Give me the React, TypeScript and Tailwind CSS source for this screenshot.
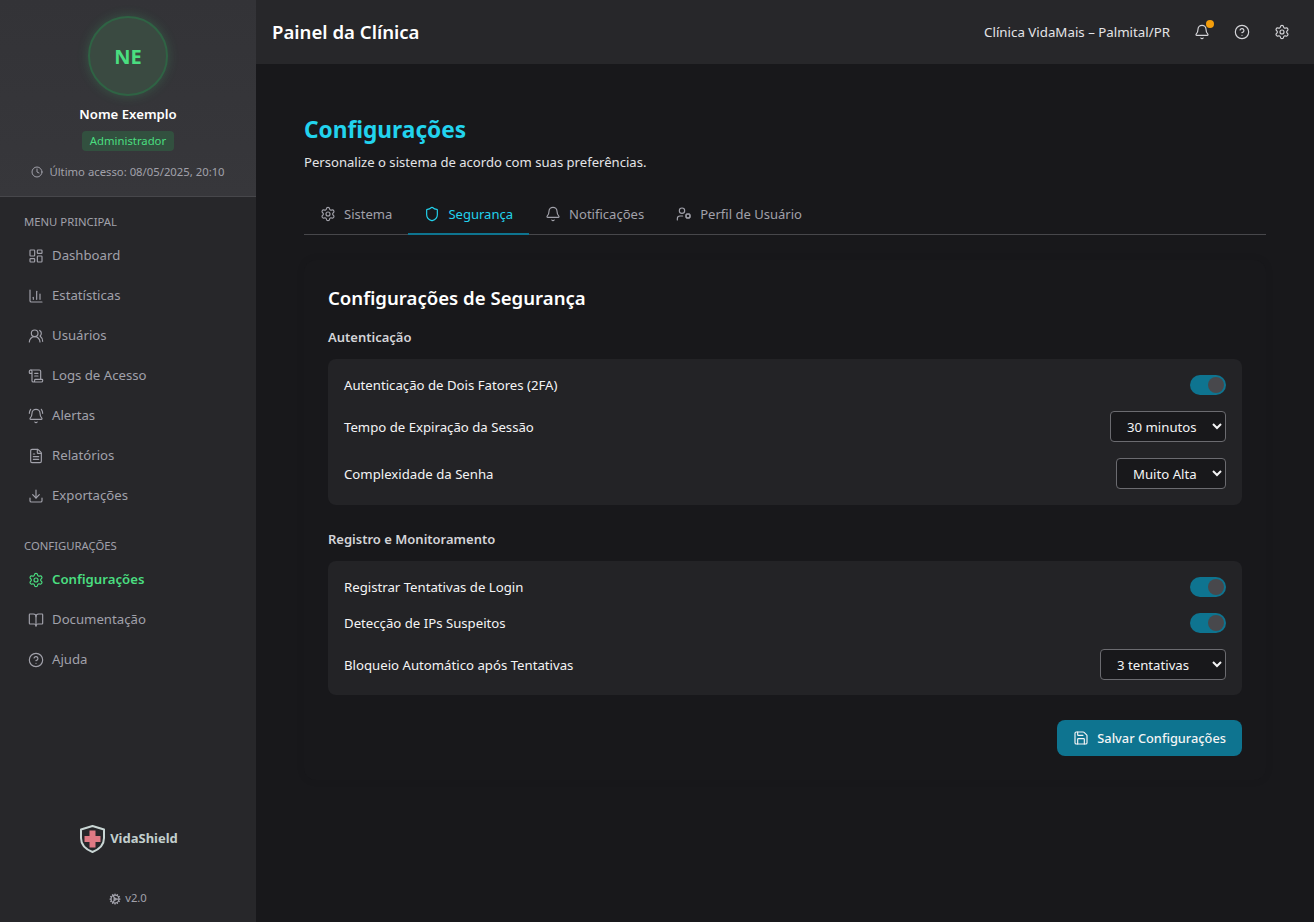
import {
  Bell,
  BellRing,
  BookOpen,
  ChartColumn,
  CircleHelp,
  Clock,
  Cog,
  Download,
  FileText,
  LayoutDashboard,
  Save,
  ScrollText,
  Settings,
  Shield,
  UserCog,
  UsersRound,
} from "lucide-react";
import type { ComponentType, ReactNode } from "react";

type IconType = ComponentType<{ className?: string; size?: number; strokeWidth?: number }>;

const mainMenu: [string, IconType][] = [
  ["Dashboard", LayoutDashboard],
  ["Estatísticas", ChartColumn],
  ["Usuários", UsersRound],
  ["Logs de Acesso", ScrollText],
  ["Alertas", BellRing],
  ["Relatórios", FileText],
  ["Exportações", Download],
];

const configMenu: [string, IconType, boolean][] = [
  ["Configurações", Settings, true],
  ["Documentação", BookOpen, false],
  ["Ajuda", CircleHelp, false],
];

const tabs: [string, IconType, boolean][] = [
  ["Sistema", Settings, false],
  ["Segurança", Shield, true],
  ["Notificações", Bell, false],
  ["Perfil de Usuário", UserCog, false],
];

function Logo() {
  return (
    <svg aria-hidden="true" className="h-[28px] w-[25px]" fill="none" viewBox="0 0 25 28">
      <path
        d="M12.5 1 24 4.5V13c0 6.6-4.4 11.2-11.5 14C5.4 24.2 1 19.6 1 13V4.5L12.5 1Z"
        stroke="#c9d6d4"
        strokeLinejoin="round"
        strokeWidth="2"
      />
      <path d="M9.500 5.500h6V11h5v6h-5v5.500h-6V17h-5v-6h5V5.500Z" fill="#df7a84" />
    </svg>
  );
}

function Toggle() {
  return (
    <span className="flex h-5 w-9 items-center justify-end rounded-full bg-[#0e7490] pr-0.5">
      <span className="h-4 w-4 rounded-full bg-[#48484c]" />
    </span>
  );
}

function Select({ options, value }: { options: string[]; value: string }) {
  return (
    <select
      className="h-[31px] rounded border border-[#6b6b70] bg-[#18181b] px-3 text-[13.2px] text-[#f4f4f5]"
      defaultValue={value}
    >
      {options.map((option) => (
        <option key={option}>{option}</option>
      ))}
    </select>
  );
}

function SettingRow({ label, className, children }: { label: string; className: string; children: ReactNode }) {
  return (
    <div className={`flex items-center justify-between ${className}`}>
      <span className="pt-0.5 text-[13.2px] text-[#f4f4f5]">{label}</span>
      {children}
    </div>
  );
}

export default function App() {
  return (
    <div className="flex h-[922px] w-full overflow-hidden bg-[#18181b] font-['Noto_Sans',sans-serif] text-white">
      <aside className="flex w-64 shrink-0 flex-col bg-[#27272a]">
        <div className="flex h-[197px] flex-col items-center border-b border-[#47474b] bg-gradient-to-b from-[#333337] to-[#37373b] pt-4">
          <div className="flex h-20 w-20 items-center justify-center rounded-full border-2 border-[#2f6344] bg-[#3a4a41] pt-0.5 text-xl font-bold text-[#4ade80] shadow-[0_0_12px_rgba(74,222,128,0.2)]">
            NE
          </div>
          <div className="mt-2 text-[13.2px] font-semibold leading-5">Nome Exemplo</div>
          <div className="mt-[7px] rounded bg-[#32503f] px-2 py-0.5 text-[11.3px] leading-4 text-[#4ade80]">Administrador</div>
          <div className="mt-[13px] flex items-center gap-1.5 text-[11.3px] leading-4 text-[#a1a1aa]">
            <Clock size={12} />
            <span>Último acesso: 08/05/2025, 20:10</span>
          </div>
        </div>

        <nav className="flex flex-col px-6 pt-[17px]">
          <div className="mb-1.5 text-[11.3px] leading-4 text-[#a1a1aa]">MENU PRINCIPAL</div>
          {mainMenu.map(([label, Icon]) => (
            <div key={label} className="flex h-10 items-center gap-2 pl-1 text-[13.2px] text-[#a1a1aa]">
              <Icon size={16} strokeWidth={1.75} />
              <span>{label}</span>
            </div>
          ))}
          <div className="mb-1.5 mt-[22px] text-[11.3px] leading-4 text-[#a1a1aa]">CONFIGURAÇÕES</div>
          {configMenu.map(([label, Icon, active]) => (
            <div
              key={label}
              className={`flex h-10 items-center gap-2 pl-1 text-[13.2px] ${active ? "font-semibold text-[#4ade80]" : "text-[#a1a1aa]"}`}
            >
              <Icon size={16} strokeWidth={1.75} />
              <span>{label}</span>
            </div>
          ))}
        </nav>

        <div className="mt-auto flex flex-col items-center pb-[15px]">
          <div className="flex items-center gap-[5px] pl-[2px] text-[#c2cfcd]">
            <Logo />
            <span className="text-[13px] font-bold">VidaShield</span>
          </div>
          <div className="mt-[37px] flex items-center gap-1 text-[11.3px] text-[#a1a1aa]">
            <Cog size={12} strokeWidth={2.5} />
            <span>v2.0</span>
          </div>
        </div>
      </aside>

      <div className="flex min-w-0 flex-1 flex-col">
        <header className="flex h-16 items-center justify-between bg-[#27272a] pl-4 pr-6">
          <h1 className="text-[18.6px] font-semibold">Painel da Clínica</h1>
          <div className="flex items-center text-[#d4d4d8]">
            <span className="mr-6 pt-0.5 text-[13.3px] text-[#e4e4e7]">Clínica VidaMais – Palmital/PR</span>
            <span className="relative mr-6">
              <Bell size={16} strokeWidth={1.75} />
              <span className="absolute -right-1 -top-1 h-2 w-2 rounded-full bg-[#f59e0b]" />
            </span>
            <CircleHelp size={16} strokeWidth={1.75} className="mr-6" />
            <Settings size={16} strokeWidth={1.75} />
          </div>
        </header>

        <main className="flex-1 px-12 pt-12">
          <h2 className="text-[22.7px] font-bold leading-9 text-[#22d3ee]">Configurações</h2>
          <p className="mt-1 text-[13.1px] leading-5 text-[#e4e4e7]">Personalize o sistema de acordo com suas preferências.</p>

          <div className="mt-[23px] flex border-b border-[#47474b]">
            {tabs.map(([label, Icon, active]) => (
              <div
                key={label}
                className={`-mb-px flex h-10 items-center gap-2 border-b-2 px-4 text-[13.05px] ${active ? "border-[#0e7490] text-[#22d3ee]" : "border-transparent text-[#a1a1aa]"}`}
              >
                <Icon size={16} strokeWidth={1.75} />
                <span className="pt-0.5">{label}</span>
              </div>
            ))}
          </div>

          <section className="mt-[25px] rounded-xl bg-[#18181b] p-6 shadow-[0_0_8px_rgba(0,0,0,0.08)]">
            <h3 className="text-[18.6px] font-semibold leading-7">Configurações de Segurança</h3>
            <h4 className="mt-[15px] text-[13px] font-semibold leading-5 text-[#d4d4d8]">Autenticação</h4>
            <div className="mt-3 rounded-lg bg-[#232326] p-4">
              <SettingRow label="Autenticação de Dois Fatores (2FA)" className="h-5">
                <Toggle />
              </SettingRow>
              <SettingRow label="Tempo de Expiração da Sessão" className="mt-4">
                <Select options={["15 minutos", "30 minutos", "60 minutos"]} value="30 minutos" />
              </SettingRow>
              <SettingRow label="Complexidade da Senha" className="mt-4">
                <Select options={["Média", "Alta", "Muito Alta"]} value="Muito Alta" />
              </SettingRow>
            </div>

            <h4 className="mt-6 text-[13px] font-semibold leading-5 text-[#d4d4d8]">Registro e Monitoramento</h4>
            <div className="mt-3 rounded-lg bg-[#232326] px-4 pb-[15px] pt-4">
              <SettingRow label="Registrar Tentativas de Login" className="h-5">
                <Toggle />
              </SettingRow>
              <SettingRow label="Detecção de IPs Suspeitos" className="mt-4 h-5">
                <Toggle />
              </SettingRow>
              <SettingRow label="Bloqueio Automático após Tentativas" className="mt-4">
                <Select options={["3 tentativas", "5 tentativas", "10 tentativas"]} value="3 tentativas" />
              </SettingRow>
            </div>

            <div className="mt-[25px] flex justify-end">
              <button
                className="flex h-9 items-center gap-2 rounded-lg bg-[#0e7490] px-4 text-[12.8px] font-medium text-[#f4f4f5]"
                type="button"
              >
                <Save size={16} strokeWidth={1.75} />
                <span className="pt-0.5">Salvar Configurações</span>
              </button>
            </div>
          </section>
        </main>
      </div>
    </div>
  );
}
